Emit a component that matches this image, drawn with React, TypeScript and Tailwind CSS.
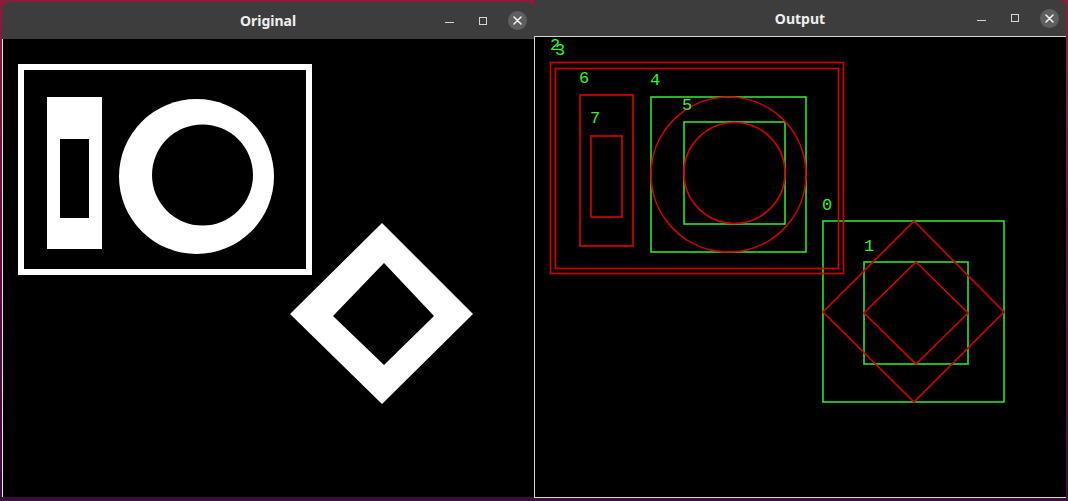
import React from "react";

const GREEN = "#2fe02f";
const RED = "#d00000";

// window buttons: minimise, maximise, close
const WindowControls: React.FC<{ dashOffset: string }> = ({ dashOffset }) => {
  return (
    <div className="flex h-full w-[102px] shrink-0">
      <div className="flex w-[34px] items-center justify-center">
        <span className={`block h-px w-[9px] bg-[#d6d6d6] ${dashOffset}`} />
      </div>
      <div className="flex w-[34px] items-center justify-center">
        <span className="block h-[8px] w-[8px] border border-[#d6d6d6]" />
      </div>
      <div className="flex w-[34px] items-center justify-center">
        <span className="flex h-[19px] w-[19px] items-center justify-center rounded-full bg-[#5f5f5f]">
          <svg width="9" height="9" viewBox="0 0 9 9">
            <path d="M1 1 L8 8 M8 1 L1 8" stroke="#f4f4f4" strokeWidth="1.5" strokeLinecap="round" />
          </svg>
        </span>
      </div>
    </div>
  );
};

const TitleBar: React.FC<{ title: string; barClass: string; dashOffset: string }> = ({
  title,
  barClass,
  dashOffset,
}) => {
  return (
    <div className={`flex shrink-0 items-center bg-[#3d3d3d] ${barClass}`}>
      <div className="w-[102px] shrink-0" />
      <div className="flex flex-1 justify-center">
        <span className="font-['Noto_Sans',sans-serif] text-[14px] font-bold text-[#efefef]">{title}</span>
      </div>
      <WindowControls dashOffset={dashOffset} />
    </div>
  );
};

const OriginalImage = () => (
  <svg width="531" height="458" viewBox="3 39 531 458" className="block">
    <rect x="3" y="39" width="531" height="458" fill="#000" />
    <rect x="21" y="67" width="288" height="205" fill="none" stroke="#fff" strokeWidth="6" />
    <rect x="47" y="97" width="55" height="152" fill="#fff" />
    <rect x="60" y="139" width="29" height="79" fill="#000" />
    <circle cx="196.5" cy="176.5" r="77.5" fill="#fff" />
    <circle cx="202.5" cy="175" r="50.5" fill="#000" />
    <path
      d="M382 223 L473 314 L382 404 L290 314 Z M384 263 L333 316 L384 365 L434 316 Z"
      fill="#fff"
      fillRule="evenodd"
    />
  </svg>
);

const labels: { t: string; x: number; y: number }[] = [
  { t: "0", x: 822, y: 210 },
  { t: "1", x: 864, y: 251 },
  { t: "2", x: 550, y: 50 },
  { t: "3", x: 555, y: 55 },
  { t: "4", x: 650, y: 85 },
  { t: "5", x: 682, y: 110 },
  { t: "6", x: 579, y: 83 },
  { t: "7", x: 590, y: 123 },
];

const OutputImage = () => (
  <svg width="531" height="460" viewBox="535 37 531 460" className="block">
    <rect x="535" y="37" width="531" height="460" fill="#000" />
    {/* bounding boxes */}
    <g fill="none" stroke={GREEN} strokeWidth="1.6">
      <rect x="651" y="97" width="155" height="155" />
      <rect x="684" y="122" width="101" height="102" />
      <rect x="823" y="221" width="181" height="181" />
      <rect x="864" y="262" width="104" height="102" />
    </g>
    {/* contours */}
    <g fill="none" stroke={RED} strokeWidth="1.7">
      <rect x="550.5" y="62.5" width="293" height="211" />
      <rect x="555.5" y="68.5" width="283" height="200" />
      <rect x="580" y="95" width="53" height="151" />
      <rect x="591" y="136" width="31" height="81" />
      <circle cx="728.5" cy="174.5" r="77.5" />
      <circle cx="734.5" cy="173" r="50.5" />
      <path d="M914 221 L1004 312 L914 402 L823 312 Z" />
      <path d="M916 262 L968 313 L916 364 L864 313 Z" />
    </g>
    <g fill="#34f034" fontFamily="'Liberation Mono', monospace" fontSize="17">
      {labels.map((l) => (
        <text key={l.t} x={l.x} y={l.y}>
          {l.t}
        </text>
      ))}
    </g>
  </svg>
);

export default function App() {
  return (
    <div className="flex h-[501px] w-[1068px] overflow-hidden bg-gradient-to-b from-[#8a1d3a] via-[#5e1240] to-[#3e0b3c]">
      {/* left window */}
      <div className="ml-[2px] mt-[2px] flex h-[495px] w-[532px] flex-col overflow-hidden rounded-t-[8px]">
        <TitleBar title="Original" barClass="h-[37px]" dashOffset="mt-[4px]" />
        <div className="flex-1 border-l border-[#e6e6e6] bg-black">
          <OriginalImage />
        </div>
      </div>
      {/* right window */}
      <div className="flex h-[498px] w-[532px] flex-col overflow-hidden rounded-tr-[8px]">
        <TitleBar title="Output" barClass="h-[36px]" dashOffset="mt-[4px]" />
        <div className="border-y border-l border-[#d4d4d4] bg-black">
          <OutputImage />
        </div>
      </div>
    </div>
  );
}
